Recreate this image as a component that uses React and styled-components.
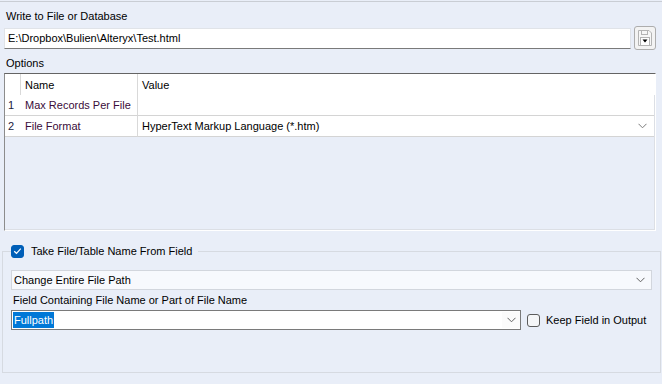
import React from 'react';
import styled, { createGlobalStyle } from 'styled-components';

const GlobalStyle = createGlobalStyle`
    html, body {
        margin: 0;
        padding: 0;
        background: #e9eef8;
    }
    body {
        font-family: "Liberation Sans", Arial, sans-serif;
        font-size: 11px;
        color: #000;
    }
`;

const Page = styled.div`
    width: 662px;
    height: 383px;
    box-sizing: border-box;
    margin-top: 1px;
    border-top: 1px solid #c9cdd4;
    padding: 0 6px 0 4px;
    background: #e9eef8;
    display: flex;
    flex-direction: column;
`;

const Label = styled.div`
    line-height: 14px;
    margin-top: ${(p) => p.$top || 0}px;
    padding-left: ${(p) => p.$indent || 2}px;
    color: #000;
    white-space: nowrap;
`;

const PathRow = styled.div`
    display: flex;
    align-items: center;
    gap: 3px;
    margin-top: 3px;
    height: 24px;
`;

const PathInput = styled.div`
    flex: 1;
    height: 21px;
    box-sizing: border-box;
    background: #fff;
    border: 1px solid #e0e3e8;
    border-bottom-color: #7a7a7a;
    display: flex;
    align-items: center;
    padding-left: 3px;
`;

const SaveButton = styled.div`
    width: 22px;
    height: 24px;
    box-sizing: border-box;
    border: 1px solid #adadad;
    border-radius: 3px;
    background: #f3f3f3;
    display: flex;
    align-items: center;
    justify-content: center;
`;

const Grid = styled.div`
    margin-top: 3px;
    height: 158px;
    box-sizing: border-box;
    border-top: 1px solid #646464;
    border-left: 1px solid #8c8c8c;
    border-right: 1px solid #fff;
    border-bottom: 1px solid #fff;
    box-shadow: inset -1px -1px 0 #dcdfe5;
    background: #e9eef8;
    display: grid;
    grid-template-columns: 16px 117px 1fr;
    grid-auto-rows: min-content;
`;

const Cell = styled.div`
    height: ${(p) => p.$h || 21}px;
    box-sizing: border-box;
    background: #fff;
    display: flex;
    align-items: center;
    padding-left: ${(p) => p.$pad ?? 4}px;
    border-right: ${(p) => (p.$divider ? '1px solid #d9d9d9' : 'none')};
    border-bottom: ${(p) => (p.$line ? '1px solid #d4d4d4' : 'none')};
    color: ${(p) => p.$color || '#000'};
`;

const ValueCell = styled(Cell)`
    justify-content: space-between;
    padding-right: 7px;
    margin-right: 1px;
`;

const GroupBox = styled.fieldset`
    margin: 13px -5px 0 -2px;
    padding: 0 8px 42px 8px;
    border: 1px solid #d6dae1;
    border-radius: 0;
    display: flex;
    flex-direction: column;
`;

const Legend = styled.legend`
    padding: 0 6px 0 0;
    margin-left: 0;
    height: 14px;
    display: flex;
    align-items: center;
    gap: 7px;
    line-height: 14px;
`;

const CheckBox = styled.span`
    width: 13px;
    height: 13px;
    box-sizing: border-box;
    border-radius: 3px;
    display: inline-flex;
    align-items: center;
    justify-content: center;
    flex-shrink: 0;
    background: ${(p) => (p.$checked ? '#005fb8' : '#f5f6f8')};
    border: 1px solid ${(p) => (p.$checked ? '#005fb8' : '#5c5c5c')};
`;

const Select = styled.div`
    margin-top: 12px;
    height: 20px;
    box-sizing: border-box;
    background: #f7f9fd;
    border: 1px solid #d2d6dd;
    display: flex;
    align-items: center;
    justify-content: space-between;
    padding: 0 6px 0 2px;
`;

const ComboRow = styled.div`
    margin-top: 3px;
    display: flex;
    align-items: center;
    gap: 6px;
`;

const Combo = styled.div`
    width: 510px;
    height: 20px;
    box-sizing: border-box;
    background: #fff;
    border: 1px solid #7a7a7a;
    display: flex;
    align-items: stretch;
    padding: 1px 0 1px 1px;
`;

const ComboText = styled.div`
    flex: 1;
    display: flex;
    align-items: center;
`;

const Selected = styled.span`
    background: #0078d7;
    color: #fff;
    height: 100%;
    display: flex;
    align-items: center;
    padding: 0 1px;
`;

const ComboArrow = styled.div`
    width: 18px;
    display: flex;
    align-items: center;
    justify-content: center;
    background: #fbfbfb;
`;

const CheckLabel = styled.label`
    display: flex;
    align-items: center;
    gap: 6px;
    white-space: nowrap;
`;

const Chevron = ({ color = '#606060' }) => (
    <svg width="9" height="6" viewBox="0 0 9 6">
        <path d="M0.5 0.8 L4.5 4.8 L8.5 0.8" fill="none" stroke={color} strokeWidth="1" />
    </svg>
);

const SaveIcon = () => (
    <svg width="16" height="18" viewBox="0 0 16 18">
        <path
            d="M1.5 1.5 H12 L14.5 4 V16.5 H1.5 Z"
            fill="#f7f7f7"
            stroke="#b4b4b4"
            strokeWidth="1"
        />
        <rect x="4.5" y="1.5" width="6" height="4" fill="none" stroke="#b4b4b4" strokeWidth="1" />
        <rect x="3.5" y="8.5" width="9" height="8" fill="#fff" stroke="#b4b4b4" strokeWidth="1" />
        <path d="M5.5 10.5 H10.5 L8 13.5 Z" fill="#000" />
    </svg>
);

const Check = () => (
    <svg width="9" height="8" viewBox="0 0 9 8">
        <path d="M1.2 4.2 L3.5 6.3 L7.8 1.6" fill="none" stroke="#fff" strokeWidth="1.2" />
    </svg>
);

const rows = [
    { id: 1, name: 'Max Records Per File', value: '' },
    { id: 2, name: 'File Format', value: 'HyperText Markup Language (*.htm)', dropdown: true },
];

export default function App() {
    return (
        <>
            <GlobalStyle />
            <Page>
                <Label $top={7}>Write to File or Database</Label>
                <PathRow>
                    <PathInput>E:\Dropbox\Bulien\Alteryx\Test.html</PathInput>
                    <SaveButton>
                        <SaveIcon />
                    </SaveButton>
                </PathRow>

                <Label $top={6}>Options</Label>
                <Grid>
                    <Cell $pad={0} $divider />
                    <Cell $divider>Name</Cell>
                    <Cell>Value</Cell>
                    {rows.map((row) => (
                        <React.Fragment key={row.id}>
                            <Cell $pad={3} $line $color="#1a1a40">
                                {row.id}
                            </Cell>
                            <Cell $line $divider $color="#3a0c3a">
                                {row.name}
                            </Cell>
                            <ValueCell $line>
                                <span>{row.value}</span>
                                {row.dropdown && <Chevron color="#7a7a7a" />}
                            </ValueCell>
                        </React.Fragment>
                    ))}
                </Grid>

                <GroupBox>
                    <Legend>
                        <CheckBox $checked>
                            <Check />
                        </CheckBox>
                        Take File/Table Name From Field
                    </Legend>
                    <Select>
                        <span>Change Entire File Path</span>
                        <Chevron />
                    </Select>
                    <Label $top={3} $indent={2}>
                        Field Containing File Name or Part of File Name
                    </Label>
                    <ComboRow>
                        <Combo>
                            <ComboText>
                                <Selected>Fullpath</Selected>
                            </ComboText>
                            <ComboArrow>
                                <Chevron />
                            </ComboArrow>
                        </Combo>
                        <CheckLabel>
                            <CheckBox />
                            Keep Field in Output
                        </CheckLabel>
                    </ComboRow>
                </GroupBox>
            </Page>
        </>
    );
}
